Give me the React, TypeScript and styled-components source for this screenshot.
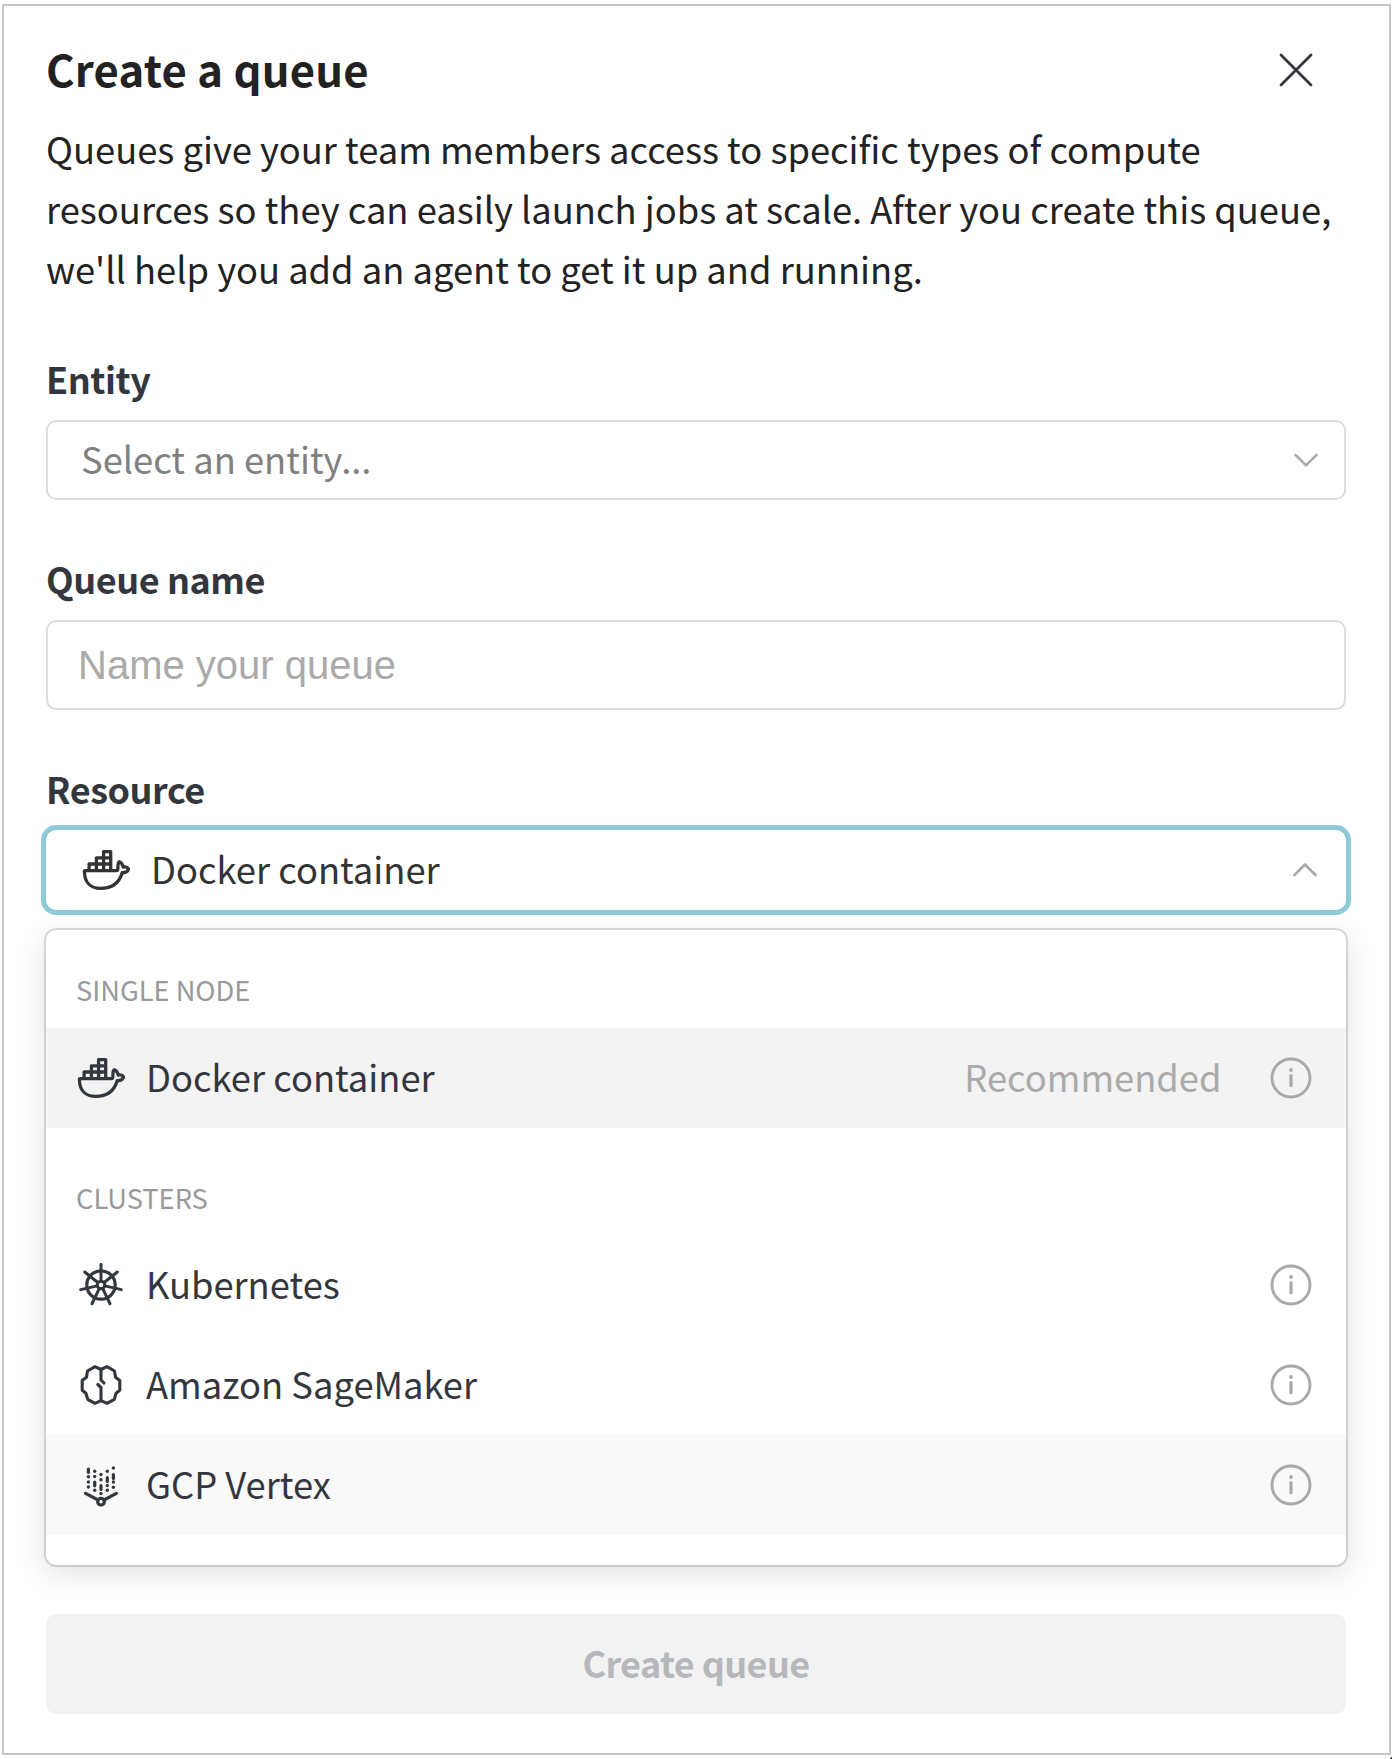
import React from "react";
import styled, { createGlobalStyle } from "styled-components";

const GlobalStyle = createGlobalStyle`
  *, *::before, *::after { box-sizing: border-box; }
  body {
    margin: 0;
    background: #fff;
    font-family: "Noto Sans CJK SC", "Open Sans", sans-serif;
    overflow: hidden;
  }
`;

const Page = styled.div`
  display: flex;
  height: 1759px;
  padding: 4px 1px 4px 2px;
  background: linear-gradient(135deg, transparent 50%, #444 50%) right bottom / 3px 3px no-repeat;
`;

const Panel = styled.main`
  flex: 1;
  display: flex;
  flex-direction: column;
  border: 2px solid #c6c6c6;
  padding: 34px 43px 0 42px;
`;

const Header = styled.header`
  display: flex;
  justify-content: space-between;
  align-items: center;
  height: 56px;
  padding-right: 32px;
`;

const Title = styled.h1`
  margin: 0;
  font-size: 43.6px;
  line-height: 56px;
  font-weight: 600;
  letter-spacing: 0.25px;
  color: #222;
`;

const CloseButton = styled.button`
  display: flex;
  margin: 4px 0 0;
  padding: 0;
  border: 0;
  background: none;
  color: #33373d;
`;

const Description = styled.p`
  margin: 22px 0 0;
  font-size: 36.34px;
  line-height: 60px;
  color: #222;
  white-space: nowrap;
`;

const Line = styled.span`
  display: block;
`;

const Field = styled.section<{ $top: number }>`
  display: flex;
  flex-direction: column;
  gap: 17px;
  margin-top: ${(p) => p.$top}px;
`;

const Label = styled.label`
  font-size: 36px;
  line-height: 50px;
  font-weight: 600;
  letter-spacing: -0.45px;
  color: #33373d;
`;

const Select = styled.div<{ $open?: boolean }>`
  display: flex;
  align-items: center;
  height: 80px;
  padding: ${(p) => (p.$open ? "0 29px 0 36px" : "0 28px 0 35px")};
  border-radius: 10px;
  box-shadow: ${(p) => (p.$open ? "0 0 0 5px #8ecad8" : "inset 0 0 0 2px #ddd")};
  color: ${(p) => (p.$open ? "#333" : "#808080")};
`;

const Value = styled.span`
  flex: 1;
  padding-bottom: 4px;
  font-size: 36.33px;
  line-height: 60px;
`;

const Caret = styled.svg`
  display: block;
  color: #a9a9a9;
`;

const Input = styled.input`
  height: 90px;
  padding: 0 30px;
  border: 2px solid #ddd;
  border-radius: 10px;
  font-family: "Liberation Sans", Arial, sans-serif;
  font-size: 40px;
  background: #fff;
  outline: none;
  &::placeholder { color: #aaa; opacity: 1; }
`;

const Menu = styled.div`
  margin-top: 20px;
  padding-bottom: 30px;
  border-radius: 10px;
  background: #fff;
  box-shadow: 0 0 0 2px rgba(0, 0, 0, 0.13), 0 8px 32px rgba(0, 0, 0, 0.13);
`;

const GroupTitle = styled.div<{ $height: number; $bottom: number }>`
  display: flex;
  align-items: flex-end;
  height: ${(p) => p.$height}px;
  padding: 0 30px ${(p) => p.$bottom}px;
  font-size: 27.25px;
  line-height: 40px;
  color: #999;
`;

const Option = styled.div<{ $bg?: string }>`
  display: flex;
  align-items: center;
  height: 100px;
  padding: 0 34px 0 31px;
  background: ${(p) => p.$bg ?? "transparent"};
  color: #33373d;
`;

const IconSlot = styled.span`
  display: flex;
  width: 48px;
  margin-right: 21px;
`;

const Hint = styled.span`
  padding-bottom: 4px;
  margin-right: 48.5px;
  font-size: 36.33px;
  line-height: 60px;
  color: #aaa;
`;

const Submit = styled.button`
  height: 100px;
  margin: 49px 0 0;
  padding: 0 0 4px;
  border: 0;
  border-radius: 10px;
  background: #f2f2f2;
  font-family: inherit;
  font-size: 36px;
  font-weight: 600;
  letter-spacing: -0.6px;
  color: #b6b7ba;
`;

const stroke = {
  fill: "none",
  stroke: "currentColor",
  strokeLinecap: "round" as const,
  strokeLinejoin: "round" as const,
};

const DockerIcon = () => (
  <svg width="48" height="48" viewBox="-0.6 0.3 48 48" {...stroke} strokeWidth="3.3">
    <path d="M2.4 24.9H34C35 24.9 35.3 24 35.3 22C35.2 18.5 35.8 16.3 36.7 16C38.6 16.8 40.2 19 40.6 21.4C42.8 20.9 45 21.7 46 23.4C45 26 42.5 27.2 39.6 27C36.5 37.5 29 42.7 18 42.7C8.5 42.7 2 37 1.8 26C1.8 25.3 2 24.9 2.4 24.9Z" />
    <path d="M6.5 24.5V18.3H28M13.8 24.5V12.1H28M21 24.5V5.9H28.1V24.5" />
  </svg>
);

const KubernetesIcon = () => (
  <svg width="48" height="48" viewBox="-24 -24 48 48" {...stroke} strokeWidth="3">
    <circle r="14.2" strokeWidth="3.2" />
    <circle r="3.8" />
    {[0, 1, 2, 3, 4, 5, 6].map((i) => (
      <path key={i} d="M0 -4V-20.8" transform={`rotate(${(i * 360) / 7})`} />
    ))}
  </svg>
);

const BrainIcon = () => (
  <svg width="48" height="48" viewBox="-24 -24 48 48" {...stroke} strokeWidth="3.1">
    <path d="M0 -15.5L-6 -18.3L-13.5 -14L-14.5 -7.7L-18.8 -4.5V5L-15 8.5L-13.3 14.3L-6 18.3L0 15.7L6 18.3L13.3 14.3L15 8.5L18.8 5V-4.5L14.5 -7.7L13.5 -14L6 -18.3Z" />
    <path d="M0 -15.5V-5L3 -2M-3.2 -0.5L0 2.5V15.5" />
  </svg>
);

const vertexBars: [number, number, number][] = [
  [-12.6, -16, -12.7],
  [-6.3, -3, 0.8],
  [0, 0.7, 4.5],
  [6.3, -7.3, -3.5],
  [12.4, -10.5, -6.5],
];

const vertexDots: [number, number][] = [
  [-12.6, -8.2], [-12.6, -3], [-12.6, 2],
  [-6.3, -13.7], [-6.3, -8.5], [-6.3, 5.3],
  [0, -10.5], [0, -5.2], [0, 8.5],
  [6.3, -13.7], [6.3, 0.5], [6.3, 5.3],
  [12.4, -17], [12.4, -3], [12.4, 2.2],
];

const VertexIcon = () => (
  <svg width="48" height="48" viewBox="-24 -24 48 48" {...stroke} strokeWidth="3.2">
    {vertexBars.map(([x, a, b]) => <path key={x} d={`M${x} ${a}V${b}`} />)}
    {vertexDots.map(([x, y]) => (
      <circle key={`${x},${y}`} cx={x} cy={y} r="1.7" fill="currentColor" stroke="none" />
    ))}
    <circle cy="16.7" r="3.3" />
    <path d="M-15.5 8.3L-3.8 14.5M15.5 8.3L3.8 14.5" />
  </svg>
);

const InfoIcon = () => (
  <svg width="42" height="42" viewBox="-21 -21 42 42" {...stroke} color="#a9a9a9">
    <circle r="19" strokeWidth="2.9" />
    <circle cy="-8" r="1.9" fill="currentColor" stroke="none" />
    <path d="M0 -2.5V7.7" strokeWidth="3.2" />
  </svg>
);

interface Resource {
  name: string;
  icon: React.FC;
  bg?: string;
  hint?: string;
}

interface Group {
  title: string;
  height: number;
  bottom: number;
  items: Resource[];
}

const groups: Group[] = [
  {
    title: "SINGLE NODE",
    height: 98,
    bottom: 19,
    items: [{ name: "Docker container", icon: DockerIcon, bg: "#f3f3f3", hint: "Recommended" }],
  },
  {
    title: "CLUSTERS",
    height: 107,
    bottom: 18,
    items: [
      { name: "Kubernetes", icon: KubernetesIcon },
      { name: "Amazon SageMaker", icon: BrainIcon },
      { name: "GCP Vertex", icon: VertexIcon, bg: "#f9f9f9" },
    ],
  },
];

export default function App() {
  return (
    <Page>
      <GlobalStyle />
      <Panel>
        <Header>
          <Title>Create a queue</Title>
          <CloseButton aria-label="Close">
            <svg width="36" height="36" viewBox="-18 -18 36 36" {...stroke} strokeWidth="2.8">
              <path d="M-15 -15L15 15M15 -15L-15 15" />
            </svg>
          </CloseButton>
        </Header>
        <Description>
          <Line>Queues give your team members access to specific types of compute</Line>
          <Line>resources so they can easily launch jobs at scale. After you create this queue,</Line>
          <Line>we'll help you add an agent to get it up and running.</Line>
        </Description>

        <Field $top={55}>
          <Label>Entity</Label>
          <Select>
            <Value>Select an entity...</Value>
            <Caret width="24" height="14" viewBox="0 -0.8 24 14" {...stroke} strokeWidth="2.6">
              <path d="M1.5 1L12 11.5L22.5 1" />
            </Caret>
          </Select>
        </Field>

        <Field $top={53}>
          <Label>Queue name</Label>
          <Input placeholder="Name your queue" />
        </Field>

        <Field $top={53}>
          <Label>Resource</Label>
          <Select $open>
            <IconSlot><DockerIcon /></IconSlot>
            <Value>Docker container</Value>
            <Caret width="24" height="14" viewBox="0 0 24 14" {...stroke} strokeWidth="2.6">
              <path d="M1.5 12L12 1.5L22.5 12" />
            </Caret>
          </Select>
        </Field>

        <Menu>
          {groups.map((g) => (
            <React.Fragment key={g.title}>
              <GroupTitle $height={g.height} $bottom={g.bottom}>{g.title}</GroupTitle>
              {g.items.map(({ name, icon: Icon, bg, hint }) => (
                <Option key={name} $bg={bg}>
                  <IconSlot><Icon /></IconSlot>
                  <Value>{name}</Value>
                  {hint && <Hint>{hint}</Hint>}
                  <InfoIcon />
                </Option>
              ))}
            </React.Fragment>
          ))}
        </Menu>

        <Submit>Create queue</Submit>
      </Panel>
    </Page>
  );
}
